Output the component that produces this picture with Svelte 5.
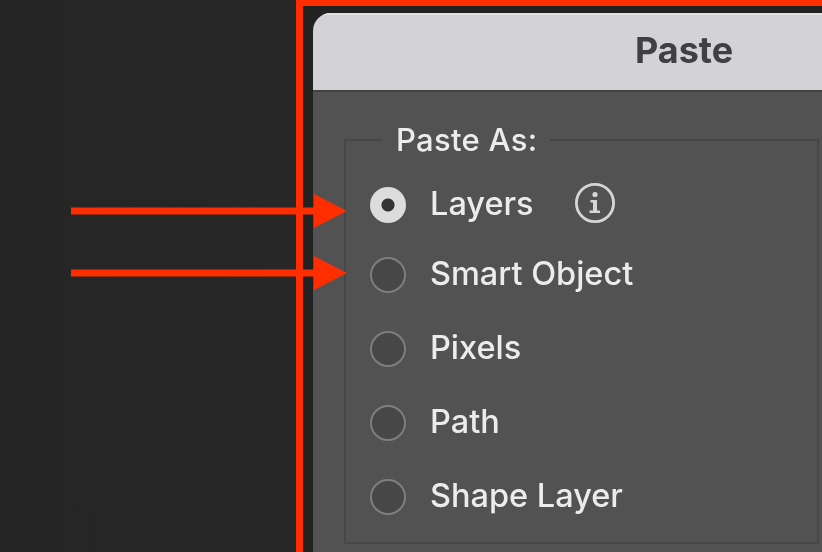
<script lang="ts">
  const options = [
    { label: "Layers", checked: true, info: true },
    { label: "Smart Object" },
    { label: "Pixels" },
    { label: "Path" },
    { label: "Shape Layer" }
  ];
  // y centre of each annotation arrow
  const arrows = [211, 273];
</script>

<div class="stage">
  <div class="frame">
    <div class="dialog">
      <div class="titlebar">Paste</div>
      <div class="body">
        <fieldset class="group">
          <legend>Paste As:</legend>
          {#each options as opt, i}
            <div class="row" class:tight={i === 0}>
              <span class="radio" class:checked={opt.checked}></span>
              <span class="label">{opt.label}</span>
              {#if opt.info}
                <svg class="info" width="40" height="40" viewBox="0 0 40 40" aria-hidden="true">
                  <circle cx="20" cy="20" r="18.6" fill="none" stroke="#d6d6d6" stroke-width="2.8" />
                  <circle cx="20" cy="11.5" r="2.6" fill="#d6d6d6" />
                  <path d="M15.5 17h6.5v10.5h3v2.5H14.5v-2.5h3.5v-8h-2.5z" fill="#d6d6d6" />
                </svg>
              {/if}
            </div>
          {/each}
        </fieldset>
      </div>
    </div>
  </div>

  {#each arrows as y}
    <svg class="arrow" style="top: {y - 18}px" width="280" height="36" viewBox="0 0 280 36" aria-hidden="true">
      <rect x="0" y="14.5" width="250" height="7" fill="#ff2e00" />
      <path d="M243 1 L276 18 L243 35 Z" fill="#ff2e00" />
    </svg>
  {/each}
</div>

<style>
  :global(body) {
    margin: 0;
    background: #262626;
  }

  .stage {
    position: relative;
    width: 822px;
    height: 552px;
    overflow: hidden;
    padding-left: 296px;
    box-sizing: border-box;
    background: linear-gradient(to right, #252525 0%, #2a2a2a 85%, #242424 100%);
    font-family: Inter, "Liberation Sans", sans-serif;
    filter: blur(0.5px);
  }

  .frame {
    width: 600px;
    height: 552px;
    box-sizing: border-box;
    border-top: 6px solid #ff2e00;
    border-left: 7px solid #ff2e00;
    padding: 7px 0 0 10px;
    background: #222222;
  }

  .dialog {
    width: 742px;
    height: 700px;
    border-radius: 18px 18px 0 0;
    overflow: hidden;
    background: #525252;
  }

  .titlebar {
    height: 79px;
    box-sizing: border-box;
    display: flex;
    align-items: center;
    justify-content: center;
    background: #d3d3d5;
    border-top: 2px solid #e2e2e3;
    border-bottom: 2px solid #424242;
    color: #404042;
    font-size: 36px;
    font-weight: 700;
    padding-bottom: 6px;
  }

  .body {
    padding: 32px 236px 0 31px;
  }

  .group {
    margin: 0;
    height: 420px;
    box-sizing: border-box;
    border: 2px solid #474747;
    padding: 10px 0 0 24px;
    min-width: 0;
  }

  legend {
    margin-left: 12px;
    padding: 0 13px 0 14px;
    color: #ececec;
    font-size: 31px;
    font-weight: 500;
    letter-spacing: 0.3px;
    line-height: 32px;
  }

  .row {
    display: flex;
    align-items: center;
    height: 74px;
    color: #ececec;
    font-size: 32.5px;
    font-weight: 500;
  }

  .row.tight {
    margin-bottom: -4px;
  }

  .radio {
    width: 36px;
    height: 36px;
    box-sizing: border-box;
    border-radius: 50%;
    border: 2.5px solid #7e7e7e;
    background: #474747;
    margin: 3px 24px 0 0;
  }

  .radio.checked {
    border: 0;
    background: radial-gradient(circle, #333333 0 6px, #dcdcdc 7px);
  }

  .info {
    margin-left: 41px;
  }

  .arrow {
    position: absolute;
    left: 71px;
  }
</style>
